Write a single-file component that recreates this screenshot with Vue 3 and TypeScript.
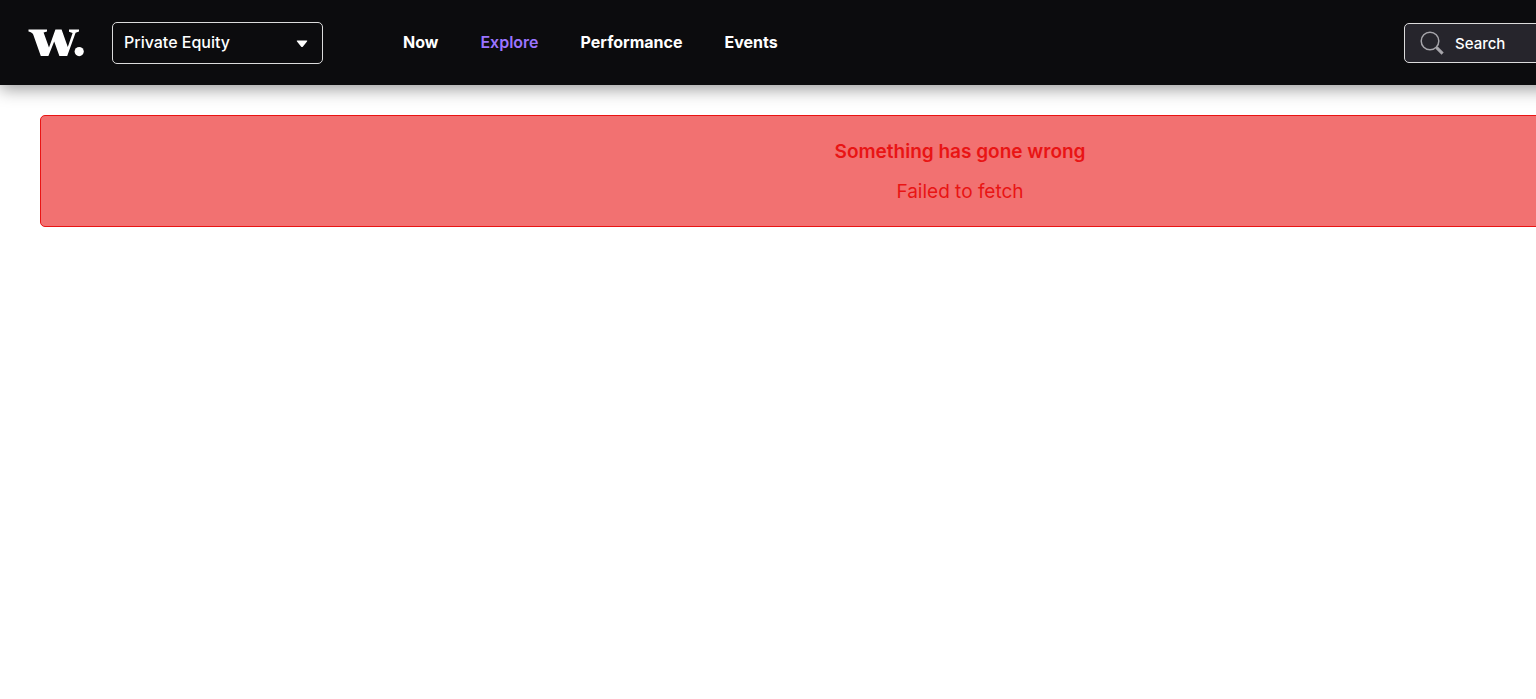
<script setup lang="ts">
import { ref } from 'vue'

interface NavItem {
  label: string
  href: string
}

const navItems: NavItem[] = [
  { label: 'Now', href: '#now' },
  { label: 'Explore', href: '#explore' },
  { label: 'Performance', href: '#performance' },
  { label: 'Events', href: '#events' },
]
const active = ref('Explore')
const market = ref('Private Equity')
const query = ref('')
</script>

<template>
  <div class="page">
    <header class="header">
      <a class="logo" href="#home" aria-label="Home">
        <svg width="57" height="28" viewBox="0 0 57 28" aria-hidden="true">
          <path
            fill="#fff"
            d="M.5 .5H19V2.6L15.6 3.6L21 18.4L27.4 .5H33.6L39.8 18L44.6 4L41 2.8V.5H51V2.6L47.6 3.8L39.2 27H31.4L26.2 12.4L20.4 27H12.8L5.2 5.4C4.6 3.6 3 3.2 .5 2.4Z"
          />
          <circle cx="51.2" cy="22.6" r="4.6" fill="#fff" />
        </svg>
      </a>
      <div class="market">
        <select v-model="market" class="market-select" aria-label="Market">
          <option>Private Equity</option>
        </select>
        <svg class="caret" width="12" height="8" viewBox="0 0 12 8" aria-hidden="true">
          <path fill="#fff" d="M1.4 .5H10.6Q11.9 .5 11 1.6L7 6.6Q6 7.6 5 6.6L1 1.6Q.1 .5 1.4 .5Z" />
        </svg>
      </div>
      <nav class="nav">
        <a
          v-for="item in navItems"
          :key="item.label"
          :href="item.href"
          :class="{ active: active === item.label }"
          @click="active = item.label"
          >{{ item.label }}</a
        >
      </nav>
      <label class="search">
        <svg width="24" height="24" viewBox="0 0 24 24" fill="none" stroke="#a6a5aa" aria-hidden="true">
          <circle cx="10" cy="10" r="8.8" stroke-width="1.5" />
          <path d="M16.2 16.2L17.6 17.6" stroke-width="1.5" />
          <path d="M16.6 16.6L22.6 22.6" stroke-width="3" />
        </svg>
        <input v-model="query" type="text" placeholder="Search" aria-label="Search" />
      </label>
    </header>
    <main class="content">
      <section class="error" role="alert">
        <h1>Something has gone wrong</h1>
        <p>Failed to fetch</p>
      </section>
    </main>
  </div>
</template>

<style>
html {
  overflow-x: auto;
  scrollbar-width: none;
  background: #fff;
}
</style>

<style scoped>
.page {
  min-width: 1920px;
  font-family: Inter, 'Liberation Sans', sans-serif;
}
.header {
  display: flex;
  align-items: center;
  box-sizing: border-box;
  height: 85px;
  padding: 0 40px 0 28px;
  background: #0c0c0e;
  box-shadow: 0 4px 16px rgba(0, 0, 0, 0.4);
}
.logo {
  display: flex;
  width: 84px;
}
.market {
  position: relative;
  width: 211px;
}
.market-select {
  display: block;
  box-sizing: border-box;
  width: 100%;
  height: 42px;
  padding: 0 40px 2px 11px;
  border: 1px solid #dcdcdc;
  border-radius: 5px;
  background: transparent;
  color: #fff;
  font: 500 16px/24px Inter, 'Liberation Sans', sans-serif;
  appearance: none;
}
.caret {
  position: absolute;
  top: 18px;
  right: 15px;
  pointer-events: none;
}
.nav {
  display: flex;
  gap: 42px;
  margin-left: 80px;
  padding-bottom: 2px;
}
.nav a {
  color: #fff;
  font-size: 16px;
  font-weight: 700;
  line-height: 24px;
  text-decoration: none;
}
.nav a.active {
  color: #9b74ff;
  font-weight: 600;
}
.search {
  display: flex;
  align-items: center;
  gap: 11px;
  box-sizing: border-box;
  width: 476px;
  height: 40px;
  margin-left: auto;
  padding: 0 15px;
  border: 1px solid #dcdcdc;
  border-radius: 5px;
  background: #26252c;
}
.search input {
  flex: 1;
  min-width: 0;
  padding: 2px 0 0;
  border: 0;
  outline: 0;
  background: transparent;
  color: #fff;
  font: 500 15px/24px Inter, 'Liberation Sans', sans-serif;
}
.search input::placeholder {
  color: #fff;
  opacity: 1;
}
.content {
  padding: 30px 40px;
}
.error {
  padding: 21px 20px 19px;
  border: 1px solid #e91414;
  border-radius: 5px;
  background: #f27171;
  color: #e91414;
  text-align: center;
}
.error h1,
.error p {
  margin: 0;
  font-size: 19px;
  line-height: 30px;
}
.error h1 {
  font-weight: 600;
}
.error p {
  margin-top: 10px;
  font-weight: 400;
}
</style>
